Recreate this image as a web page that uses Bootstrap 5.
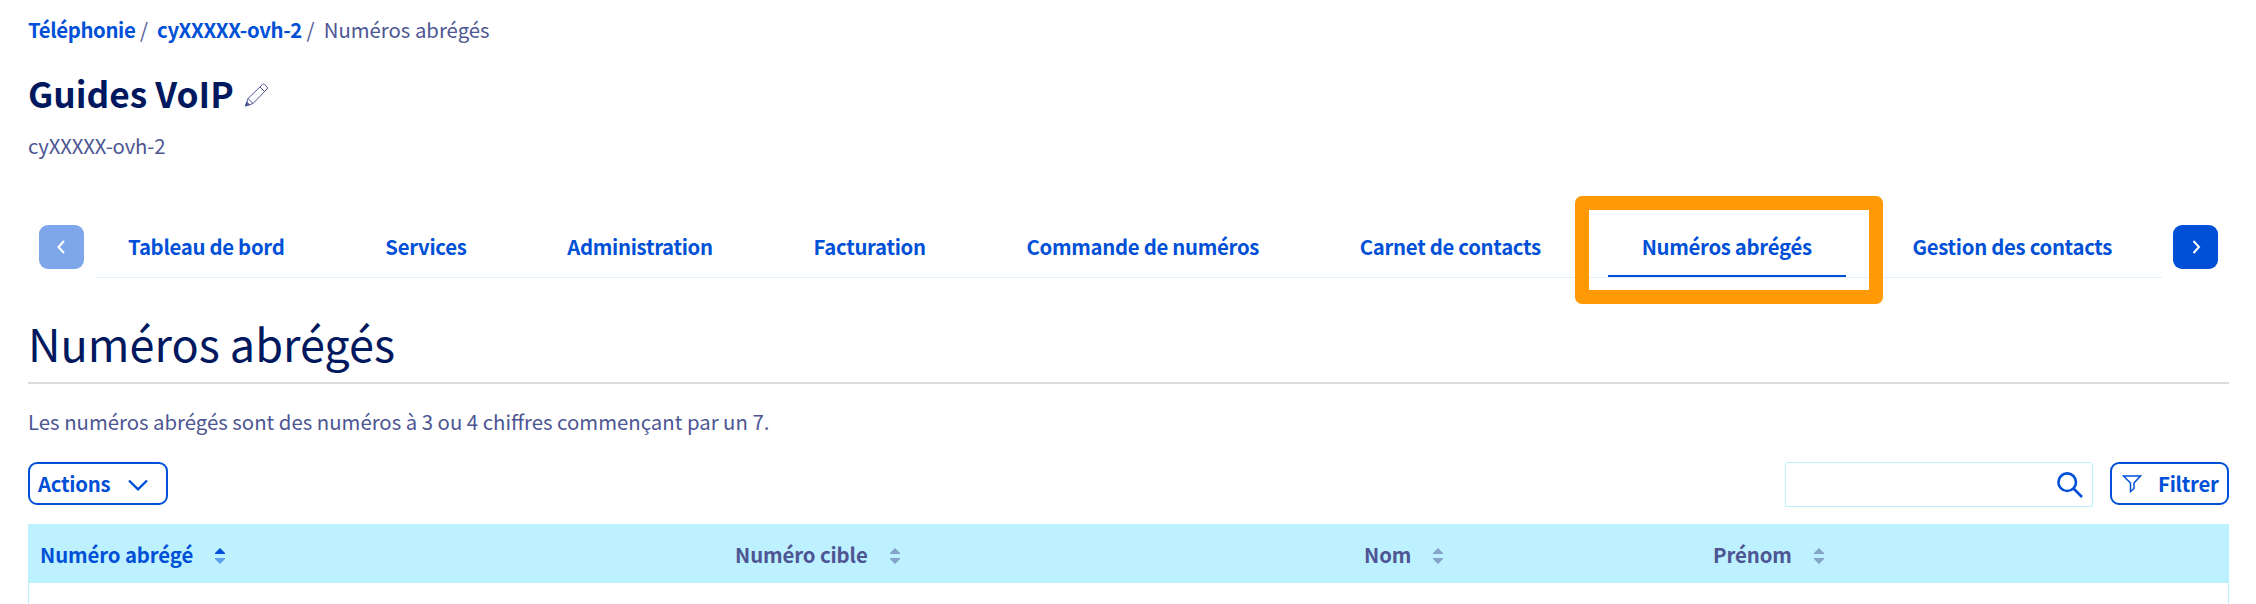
<!DOCTYPE html>
<html lang="fr">
<head>
<meta charset="utf-8">
<meta name="viewport" content="width=device-width, initial-scale=1">
<title>Numéros abrégés</title>
<link href="https://cdn.jsdelivr.net/npm/bootstrap@5.3.0/dist/css/bootstrap.min.css" rel="stylesheet">
<style>
:root{--brand:#0050d7;--ink:#00185e;--text:#4d5693;--sky:#bef1ff}
body{font-family:"Noto Sans CJK JP",sans-serif;font-size:20.35px;line-height:32px;color:var(--text);background:#fff}
a,.tabs .nav-link{color:var(--brand);text-decoration:none;font-weight:700;letter-spacing:-.3px}
.page{padding:13px 27px 0 28px;height:604px}
.crumbs{height:32px;white-space:pre}
.crumbs a{letter-spacing:-.36px}
.service-title{font-size:35.3px;line-height:48px;font-weight:700;color:var(--ink);margin-top:24px}
.service-id{margin-top:12px;letter-spacing:-.15px}
.tabs-bar{margin:64px 11px 0 11px;height:53px}
.arrow{width:45px;height:44px;border-radius:9px;background:var(--brand);border:0;padding:0}
.arrow:disabled{opacity:.5;background:var(--brand)}
.tabs{margin:0 11px;border-bottom:1px solid #e0f1fb;height:53px;flex-wrap:nowrap;min-width:0}
.tabs .nav-item{margin:0 16.4px;position:relative}
.tabs .nav-link{padding:5px 34px 0;height:52px;line-height:32px;white-space:nowrap;border-radius:0}
.tabs .nav-item:first-child .nav-link{padding-left:33px}
.tabs .nav-link.active{border-bottom:2px solid var(--brand)}
.callout{position:absolute;left:-33px;top:-29px;width:308px;height:108px;border:14px solid #ff9a06;border-radius:7px;pointer-events:none}
.section-title{font-size:45px;line-height:64px;font-weight:400;color:var(--ink);margin:33px 0 0;padding-bottom:7px;border-bottom:2px solid #dcdcdc}
.intro{margin:21px 0 0}
.toolbar{margin-top:25px;height:62px}
.btn-line{height:43px;border:2px solid var(--brand);border-radius:9px;color:var(--brand);font-weight:700;font-size:20.35px;letter-spacing:-.25px;line-height:32px;padding:0 0 2px}
.search-box{width:308px;height:45px;border:1px solid var(--sky);border-radius:3px 3px 0 0;padding-right:9px;margin-right:17px}
.search-box input{border:0;background:none;box-shadow:none;height:43px}
.grid{border:1px solid var(--sky);border-bottom:0;height:81px}
.grid-head{background:var(--sky);height:58px;font-weight:700;letter-spacing:-.1px}
.grid-head>div{padding-left:11px}
.grid-head svg{margin-left:21px;margin-top:4px}
</style>
</head>
<body>
<main class="page">
  <nav class="crumbs"><a href="#">Téléphonie</a> /  <a href="#">cyXXXXX-ovh-2</a> /  <span>Numéros abrégés</span></nav>
  <div class="service-title d-flex align-items-center"><span>Guides VoIP</span>
    <svg style="margin:4px 0 0 8px" width="28" height="28" viewBox="0 0 28 28" fill="none" stroke="#4d5693" stroke-width="1"><path d="M3.500 25l2.500-7.500L20.500 3.500q1-1 2.200 0l2.300 2.300q1 1.200 0 2.200L11 22.500zM6 17.500l5 5M18 6l5 5"/><path d="M3.500 25l1.300-4 2.700 2.700z" fill="#4d5693"/></svg>
  </div>
  <div class="service-id">cyXXXXX-ovh-2</div>

  <div class="tabs-bar d-flex">
    <button class="arrow flex-shrink-0 d-flex align-items-center justify-content-center" disabled><svg width="10" height="16" viewBox="0 0 10 16" fill="none" stroke="#fff" stroke-width="2"><path d="M7 2L1.500 8l5.500 6"/></svg></button>
    <ul class="nav tabs flex-grow-1">
      <li class="nav-item ms-0"><a class="nav-link" href="#">Tableau de bord</a></li>
      <li class="nav-item"><a class="nav-link" href="#">Services</a></li>
      <li class="nav-item"><a class="nav-link" href="#">Administration</a></li>
      <li class="nav-item"><a class="nav-link" href="#">Facturation</a></li>
      <li class="nav-item"><a class="nav-link" href="#">Commande de numéros</a></li>
      <li class="nav-item"><a class="nav-link" href="#">Carnet de contacts</a></li>
      <li class="nav-item"><a class="nav-link active" href="#">Numéros abrégés</a><span class="callout"></span></li>
      <li class="nav-item me-0"><a class="nav-link" href="#">Gestion des contacts</a></li>
    </ul>
    <button class="arrow flex-shrink-0 d-flex align-items-center justify-content-center"><svg width="10" height="16" viewBox="0 0 10 16" fill="none" stroke="#fff" stroke-width="2"><path d="M2.500 2L8 8l-5.500 6"/></svg></button>
  </div>

  <h1 class="section-title">Numéros abrégés</h1>
  <p class="intro">Les numéros abrégés sont des numéros à 3 ou 4 chiffres commençant par un 7.</p>

  <div class="toolbar d-flex align-items-start">
    <button class="btn btn-line d-flex align-items-center me-auto" style="width:140px;padding-left:8px">Actions
      <svg style="margin-left:18px;margin-top:5px" width="20" height="12" viewBox="0 0 20 12" fill="none" stroke="#0050d7" stroke-width="2.400"><path d="M1 1.500L10 10.300 19 1.500"/></svg></button>
    <div class="search-box d-flex align-items-center">
      <input class="form-control" type="text" aria-label="Rechercher">
      <svg class="flex-shrink-0" width="26" height="26" viewBox="0 0 26 26" fill="none" stroke="#0050d7" stroke-width="2.600"><circle cx="10.200" cy="10.200" r="8.800"/><path d="M16.500 16.500L25 25"/></svg>
    </div>
    <button class="btn btn-line d-flex align-items-center" style="width:119px;padding-left:10px"><svg style="margin-top:2px" width="20" height="18" viewBox="0 0 20 18" fill="none" stroke="#0050d7" stroke-width="1.500"><path d="M1.500 1H18.500L12 8v5.500l-3.500 3V8z"/></svg><span style="margin-left:16px">Filtrer</span></button>
  </div>

  <div class="grid">
    <div class="grid-head d-flex align-items-center">
      <div class="d-flex align-items-center" style="width:695px;color:#0050d7">Numéro abrégé<svg width="12" height="18" viewBox="0 0 12 18" fill="#0050d7"><path d="M1 7v-1l5-5 5 5v1z"/><path d="M1 11v1l5 5 5-5v-1z" opacity=".5"/></svg></div>
      <div class="d-flex align-items-center" style="width:629px">Numéro cible<svg width="12" height="18" viewBox="0 0 12 18" fill="#4d5693" opacity=".5"><path d="M1 7v-1l5-5 5 5v1zM1 11v1l5 5 5-5v-1z"/></svg></div>
      <div class="d-flex align-items-center" style="width:349px">Nom<svg width="12" height="18" viewBox="0 0 12 18" fill="#4d5693" opacity=".5"><path d="M1 7v-1l5-5 5 5v1zM1 11v1l5 5 5-5v-1z"/></svg></div>
      <div class="d-flex align-items-center">Prénom<svg width="12" height="18" viewBox="0 0 12 18" fill="#4d5693" opacity=".5"><path d="M1 7v-1l5-5 5 5v1zM1 11v1l5 5 5-5v-1z"/></svg></div>
    </div>
  </div>
</main>
<script src="https://cdn.jsdelivr.net/npm/bootstrap@5.3.0/dist/js/bootstrap.bundle.min.js"></script>
</body>
</html>
